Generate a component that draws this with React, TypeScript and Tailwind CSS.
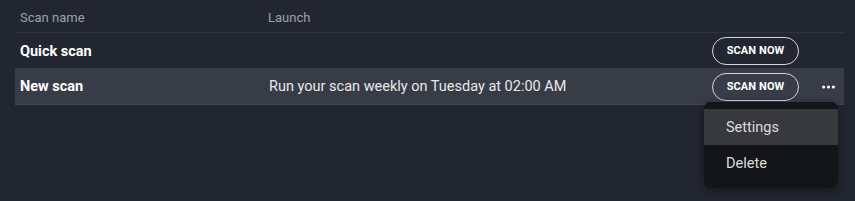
import React from "react";

function Dots() {
  return (
    <svg width="13" height="4" viewBox="0 0 13 4" fill="#ffffff">
      <circle cx="1.6" cy="2" r="1.6" />
      <circle cx="6.5" cy="2" r="1.6" />
      <circle cx="11.4" cy="2" r="1.6" />
    </svg>
  );
}

function ScanButton() {
  return (
    <button className="w-[87px] h-[28px] rounded-full border border-[#d2d5da] text-white text-[11px] font-bold tracking-[0.1px] flex items-center justify-center pt-[1px]">
      SCAN NOW
    </button>
  );
}

export default function App() {
  return (
    <div
      className="w-[855px] h-[201px] bg-[#222630] pl-[15px] pr-[11px] overflow-hidden"
      style={{ fontFamily: "Roboto, 'Liberation Sans', sans-serif" }}
    >
      <div className="relative">
        <div className="flex items-center h-[33px] pt-[3px] border-b border-[#2f343e] text-[13px] text-[#9da1a9]">
          <div className="w-[249px] pl-[5px]">Scan name</div>
          <div className="flex-1 pl-[4px]">Launch</div>
        </div>
        <div className="flex items-center h-[35px]">
          <div className="w-[249px] pl-[5px] pt-[2px] text-[14.5px] font-bold text-white">Quick scan</div>
          <div className="flex-1" />
          <ScanButton />
          <div className="w-[45px]" />
        </div>
        <div className="flex items-center h-[37px] bg-[#383c46] border-b border-[#414550]">
          <div className="w-[249px] pl-[5px] pt-[2px] text-[14.5px] font-bold text-white">New scan</div>
          <div className="flex-1 pl-[5px] pt-[2px] text-[14.5px] text-[#e8e9eb]">
            Run your scan weekly on Tuesday at 02:00 AM
          </div>
          <div className="pt-[1px]">
            <ScanButton />
          </div>
          <div className="w-[45px] pl-[23px] pt-[2px] flex items-center">
            <Dots />
          </div>
        </div>
        <div className="absolute left-[689px] top-[102px] w-[134px] rounded-[6px] bg-[#131519] py-[7px] shadow-[0_2px_8px_rgba(0,0,0,0.4)]">
          <div className="h-[36px] flex items-center pl-[22px] pt-[2px] bg-[#38393d] text-[14.5px] text-[#dcdcdc]">
            Settings
          </div>
          <div className="h-[36px] flex items-center pl-[22px] pt-[2px] text-[14.5px] text-[#dcdcdc]">
            Delete
          </div>
        </div>
      </div>
    </div>
  );
}
